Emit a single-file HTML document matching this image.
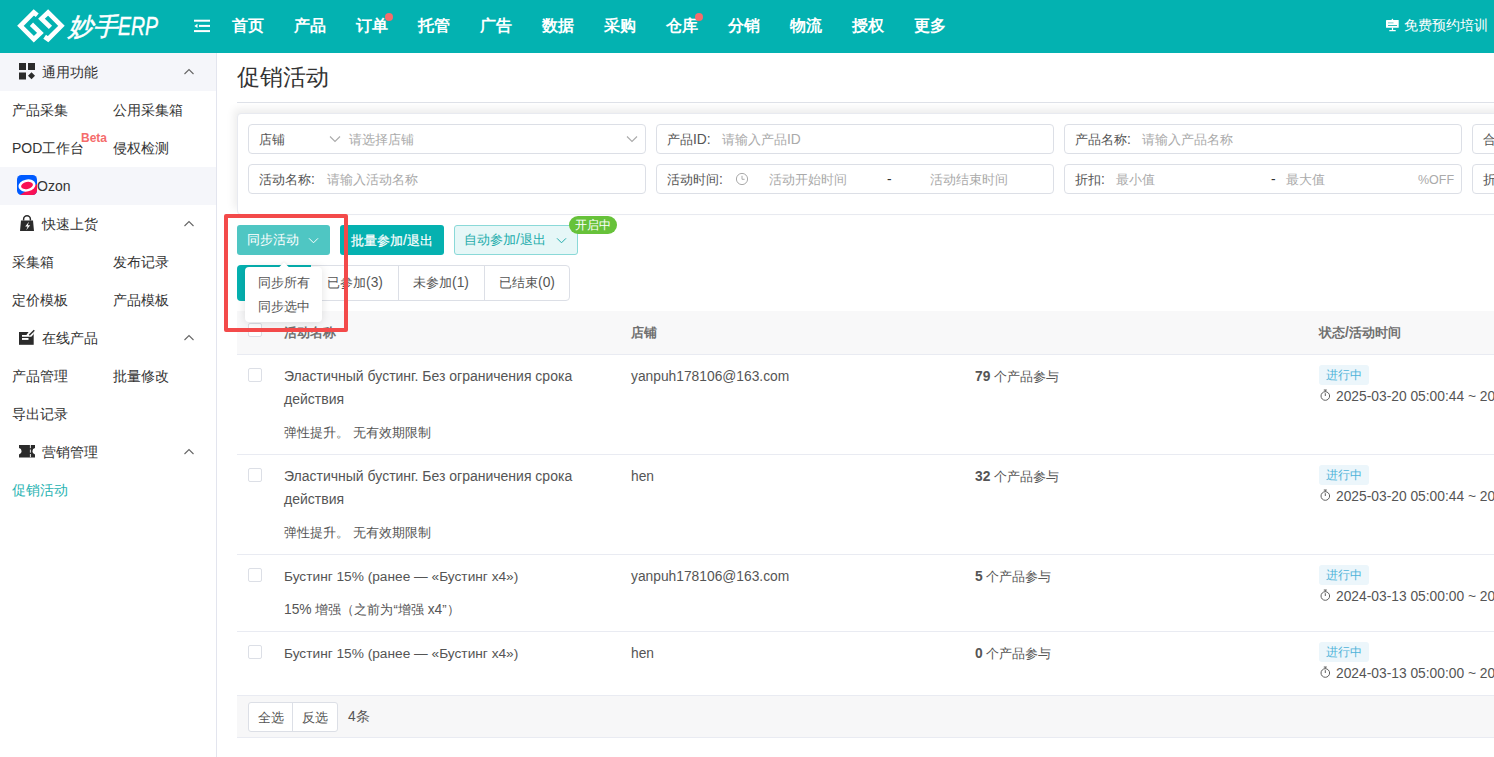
<!DOCTYPE html>
<html><head><meta charset="utf-8">
<style>
.L{font-size:13.8px}.C{font-size:14px}
*{box-sizing:border-box;margin:0;padding:0}
html,body{width:1494px;height:757px;overflow:hidden;background:#fff;font-family:"Liberation Sans",sans-serif;color:#333}
.a{position:absolute;white-space:nowrap}
#hdr{position:absolute;left:0;top:0;width:1494px;height:53px;background:#03b2b1}
.nav{position:absolute;top:15px;font-size:16px;font-weight:bold;color:#fff;line-height:22px}
.dot{position:absolute;width:8px;height:8px;border-radius:50%;background:#f56c6c}
#side{position:absolute;left:0;top:53px;width:217px;height:704px;background:#fff;border-right:1px solid #e3e5ee}
.srow{position:absolute;left:0;width:216px;height:38px}
.stxt{position:absolute;white-space:nowrap;font-size:14px;line-height:20px;color:#333}
.chev{position:absolute;left:184px;width:10px;height:10px}
#main{position:absolute;left:217px;top:53px;width:1277px;height:704px}
.inp{position:absolute;height:30px;border:1px solid #dcdfe6;border-radius:4px;background:#fff}
.lbl{position:absolute;top:6px;font-size:13px;line-height:17px;color:#555}
.ph{position:absolute;top:6px;font-size:13px;line-height:17px;color:#aaa}
.cb{position:absolute;left:248px;width:14px;height:14px;border:1px solid #dcdfe6;border-radius:2px;background:#fff}
.rtxt{position:absolute;white-space:nowrap;font-size:13px;line-height:17px;color:#555}
.tag{position:absolute;left:1319px;width:50px;height:20px;border-radius:3px;background:#ecf6fb;color:#4fb3d9;font-size:12px;line-height:20px;text-align:center}
.hline{position:absolute;left:237px;width:1257px;height:1px;background:#e9ebf2}
</style></head><body>

<div id="hdr">
  <!-- logo -->
  <svg class="a" style="left:14px;top:6px" width="56" height="40" viewBox="0 0 1060 757">
    <g fill="none" stroke="#fff" stroke-width="88" stroke-linecap="butt" stroke-linejoin="miter">
      <path d="M440 175 L375 122 L122 375 L375 628 L500 510 L330 345"/>
      <path d="M580 582 L645 628 L898 375 L645 122 L520 240 L690 405"/>
    </g>
  </svg>
  <div class="a" style="left:68px;top:11px;font-size:25px;line-height:30px;color:#fff;font-style:italic;-webkit-text-stroke:0.5px #fff">妙手</div>
  <div class="a" style="left:118px;top:11px;font-size:25px;line-height:30px;color:#fff;font-style:italic;transform:scaleX(0.78);transform-origin:0 0;font-family:'Liberation Sans';-webkit-text-stroke:0.4px #fff">ERP</div>
  <!-- hamburger -->
  <svg class="a" style="left:194px;top:19px" width="16" height="14" viewBox="0 0 16 14">
    <rect x="0" y="0.7" width="16" height="2" fill="#fff"/>
    <rect x="5" y="5.9" width="11" height="2" fill="#fff"/>
    <path d="M0.3 6.9 L3.5 4.8 L3.5 9Z" fill="#fff"/>
    <rect x="0" y="11.1" width="16" height="2" fill="#fff"/>
  </svg>
  <div class="nav" style="left:232px">首页</div>
  <div class="nav" style="left:294px">产品</div>
  <div class="nav" style="left:356px">订单</div>
  <div class="dot" style="left:385px;top:13px"></div>
  <div class="nav" style="left:418px">托管</div>
  <div class="nav" style="left:480px">广告</div>
  <div class="nav" style="left:542px">数据</div>
  <div class="nav" style="left:604px">采购</div>
  <div class="nav" style="left:666px">仓库</div>
  <div class="dot" style="left:695px;top:13px"></div>
  <div class="nav" style="left:728px">分销</div>
  <div class="nav" style="left:790px">物流</div>
  <div class="nav" style="left:852px">授权</div>
  <div class="nav" style="left:914px">更多</div>
  <svg class="a" style="left:1386px;top:18px" width="14" height="14" viewBox="0 0 14 14">
    <rect x="0" y="2" width="12.7" height="7.8" rx="0.6" fill="#fff"/>
    <path d="M5.4 2.1 L6.4 0.5 L7.4 2.1Z" fill="#fff"/>
    <rect x="2" y="4.3" width="5.5" height="1.1" fill="#7fd3d2"/>
    <rect x="2" y="7" width="9" height="1" fill="#2fbcbb"/>
    <rect x="5.9" y="9.5" width="1.2" height="3" fill="#fff"/>
    <rect x="3.2" y="12" width="6.6" height="1.2" rx="0.5" fill="#fff"/>
  </svg>
  <div class="a" style="left:1404px;top:17px;font-size:14px;line-height:16px;color:#fff">免费预约培训</div>
</div>

<div id="side">
  <div class="srow" style="top:0;background:#f5f6fa"></div>
  <svg class="a" style="left:19px;top:10px" width="17" height="17" viewBox="0 0 17 17">
    <rect x="0" y="0" width="7" height="7" fill="#2b2b2b"/>
    <rect x="9" y="0" width="7" height="7" fill="#2b2b2b"/>
    <rect x="0" y="9.5" width="7" height="7" fill="#2b2b2b"/>
    <path d="M12.5 9.2 L16 12.7 L12.5 16.2 L9 12.7Z" fill="#2b2b2b"/>
  </svg>
  <div class="stxt" style="left:42px;top:9px">通用功能</div>
  <svg class="chev" style="top:14px" viewBox="0 0 10 10"><path d="M0.5 7 L5 2.5 L9.5 7" fill="none" stroke="#666" stroke-width="1.1"/></svg>

  <div class="stxt" style="left:12px;top:47px">产品采集</div>
  <div class="stxt" style="left:113px;top:47px">公用采集箱</div>
  <div class="stxt" style="left:12px;top:85px"><span style="font-family:'Liberation Sans'">POD</span>工作台</div>
  <div class="a" style="left:81px;top:79px;font-size:12px;line-height:12px;font-weight:bold;color:#f56c6c">Beta</div>
  <div class="stxt" style="left:113px;top:85px">侵权检测</div>

  <div class="srow" style="top:114px;background:#f5f6fa"></div>
  <svg class="a" style="left:17px;top:122px" width="20" height="20" viewBox="0 0 20 20">
    <defs><clipPath id="oc"><rect x="0" y="0" width="20" height="20" rx="4.5"/></clipPath></defs>
    <g clip-path="url(#oc)">
      <rect x="0" y="0" width="20" height="20" fill="#005bff"/>
      <path d="M3 20 L20 9 L20 20Z" fill="#f91155"/>
      <ellipse cx="10" cy="10.5" rx="8.6" ry="6" transform="rotate(-12 10 10.5)" fill="#fff"/>
      <ellipse cx="10" cy="10.5" rx="6" ry="3.5" transform="rotate(-12 10 10.5)" fill="#f91155"/>
    </g>
  </svg>
  <div class="stxt" style="left:37px;top:123px;font-family:'Liberation Sans'">Ozon</div>

  <svg class="a" style="left:20px;top:162px" width="14" height="16" viewBox="0 0 14 16">
    <path d="M3.6 5.5 L3.6 4.2 A3.4 3.4 0 0 1 10.4 4.2 L10.4 5.5" fill="none" stroke="#2b2b2b" stroke-width="1.5"/>
    <path d="M1 5.5 L13 5.5 L14 16 L0 16Z" fill="#2b2b2b"/>
    <path d="M9 6.8 L5.2 11.6 L7.6 11.6 L6.2 15.2 L10.2 10.2 L7.8 10.2Z" fill="#fff"/>
  </svg>
  <div class="stxt" style="left:42px;top:161px">快速上货</div>
  <svg class="chev" style="top:166px" viewBox="0 0 10 10"><path d="M0.5 7 L5 2.5 L9.5 7" fill="none" stroke="#666" stroke-width="1.1"/></svg>

  <div class="stxt" style="left:12px;top:199px">采集箱</div>
  <div class="stxt" style="left:113px;top:199px">发布记录</div>
  <div class="stxt" style="left:12px;top:237px">定价模板</div>
  <div class="stxt" style="left:113px;top:237px">产品模板</div>

  <svg class="a" style="left:19px;top:276px" width="17" height="17" viewBox="0 0 17 17">
    <rect x="0" y="3" width="14.7" height="12.8" fill="#2b2b2b"/>
    <path d="M9.6 2.9 L14.8 2.9 L14.8 5 L12.3 7.8 L3 7.8 L3 6 L7.4 6 Z" fill="#fff"/>
    <rect x="3" y="9" width="6.5" height="1.9" fill="#fff"/>
    <path d="M10.3 6.3 L15.3 1.2" stroke="#2b2b2b" stroke-width="1.5"/>
  </svg>
  <div class="stxt" style="left:42px;top:275px">在线产品</div>
  <svg class="chev" style="top:280px" viewBox="0 0 10 10"><path d="M0.5 7 L5 2.5 L9.5 7" fill="none" stroke="#666" stroke-width="1.1"/></svg>

  <div class="stxt" style="left:12px;top:313px">产品管理</div>
  <div class="stxt" style="left:113px;top:313px">批量修改</div>
  <div class="stxt" style="left:12px;top:351px">导出记录</div>

  <svg class="a" style="left:19px;top:392px" width="17" height="13" viewBox="0 0 17 13">
    <path d="M0 0 H16 V3 A3.27 3.27 0 0 0 16 9.4 V12.5 H0 V9.4 A3.27 3.27 0 0 0 0 3 Z" fill="#2b2b2b"/>
    <path d="M11.4 0 V12.5" stroke="#fff" stroke-width="0.9" stroke-dasharray="3.2 1.3"/>
  </svg>
  <div class="stxt" style="left:42px;top:389px">营销管理</div>
  <svg class="chev" style="top:394px" viewBox="0 0 10 10"><path d="M0.5 7 L5 2.5 L9.5 7" fill="none" stroke="#666" stroke-width="1.1"/></svg>

  <div class="stxt" style="left:12px;top:427px;color:#29b3b2">促销活动</div>
</div>

<!-- main -->
<div class="a" style="left:237px;top:64px;font-size:23px;line-height:27px;color:#333">促销活动</div>
<div class="hline" style="top:102px;height:1px;background:#dfe2e9"></div>

<!-- filter card -->
<div class="a" style="left:237px;top:113px;width:1270px;height:102px;border:1px solid #e8eaf0;border-radius:4px;box-shadow:-4px -5px 9px -1px rgba(0,0,0,.075);background:#fff"></div>

<div class="inp" style="left:248px;top:124px;width:398px">
  <div class="lbl" style="left:10px">店铺</div>
  <svg class="a" style="left:80px;top:10px" width="12" height="8" viewBox="0 0 12 8"><path d="M1 1.5 L6 6.5 L11 1.5" fill="none" stroke="#aaa" stroke-width="1.1"/></svg>
  <div class="ph" style="left:100px">请选择店铺</div>
  <svg class="a" style="left:377px;top:10px" width="12" height="8" viewBox="0 0 12 8"><path d="M1 1.5 L6 6.5 L11 1.5" fill="none" stroke="#aaa" stroke-width="1.1"/></svg>
</div>
<div class="inp" style="left:656px;top:124px;width:398px">
  <div class="lbl" style="left:10px">产品<span class="L">ID:</span></div>
  <div class="ph" style="left:65px">请输入产品<span class="L">ID</span></div>
</div>
<div class="inp" style="left:1064px;top:124px;width:398px">
  <div class="lbl" style="left:10px">产品名称<span class="L">:</span></div>
  <div class="ph" style="left:77px">请输入产品名称</div>
</div>
<div class="inp" style="left:1472px;top:124px;width:100px">
  <div class="lbl" style="left:10px">合</div>
</div>

<div class="inp" style="left:248px;top:164px;width:398px">
  <div class="lbl" style="left:10px">活动名称<span class="L">:</span></div>
  <div class="ph" style="left:78px">请输入活动名称</div>
</div>
<div class="inp" style="left:656px;top:164px;width:398px">
  <div class="lbl" style="left:10px">活动时间<span class="L">:</span></div>
  <svg class="a" style="left:78px;top:7px" width="14" height="14" viewBox="0 0 14 14"><circle cx="7" cy="7" r="5.6" fill="none" stroke="#aaa" stroke-width="1"/><path d="M7 3.8 L7 7.3 L9.6 7.3" fill="none" stroke="#aaa" stroke-width="1"/></svg>
  <div class="ph" style="left:112px">活动开始时间</div>
  <div class="lbl" style="left:230px;color:#333"><span class="L">-</span></div>
  <div class="ph" style="left:273px">活动结束时间</div>
</div>
<div class="inp" style="left:1064px;top:164px;width:398px">
  <div class="lbl" style="left:10px">折扣<span class="L">:</span></div>
  <div class="ph" style="left:51px">最小值</div>
  <div class="lbl" style="left:206px;color:#333"><span class="L">-</span></div>
  <div class="ph" style="left:221px">最大值</div>
  <div class="ph" style="left:353px"><span class="L" style="font-size:12.5px">%OFF</span></div>
</div>
<div class="inp" style="left:1472px;top:164px;width:100px">
  <div class="lbl" style="left:10px">折</div>
</div>

<!-- buttons -->
<div class="a" style="left:237px;top:225px;width:93px;height:30px;border-radius:3px;background:#4fc6c3;color:#fff;font-size:13px;line-height:30px;padding-left:10px">同步活动</div>
<svg class="a" style="left:308px;top:237px" width="11" height="7" viewBox="0 0 11 7"><path d="M1 1.3 L5.5 5.8 L10 1.3" fill="none" stroke="#fff" stroke-width="1"/></svg>
<div class="a" style="left:340px;top:225px;width:104px;height:30px;border-radius:3px;background:#05b1b0;color:#fff;font-size:13px;-webkit-text-stroke:0.2px #fff;line-height:31px;text-align:center">批量参加<span class="L">/</span>退出</div>
<div class="a" style="left:454px;top:225px;width:124px;height:30px;border-radius:3px;background:#e6f7f7;border:1px solid #8ad9d8;color:#22acab;font-size:13px;line-height:28px;padding-left:9px">自动参加<span class="L">/</span>退出</div>
<svg class="a" style="left:556px;top:237px" width="11" height="7" viewBox="0 0 11 7"><path d="M1 1.3 L5.5 5.8 L10 1.3" fill="none" stroke="#22acab" stroke-width="1"/></svg>
<div class="a" style="left:569px;top:216px;width:48px;height:18px;border-radius:9px;background:#67c23a;color:#fff;font-size:12px;line-height:18px;text-align:center">开启中</div>

<!-- tabs -->
<div class="a" style="left:237px;top:265px;width:333px;height:36px;border:1px solid #dcdfe6;border-radius:4px;background:#fff"></div>
<div class="a" style="left:237px;top:265px;width:74px;height:36px;border-radius:4px 0 0 4px;background:#05b1b0;color:#fff;font-size:13px;line-height:36px;text-align:center">全部<span class="L">(4)</span></div>
<div class="a" style="left:312px;top:265px;width:86px;height:36px;font-size:13px;line-height:36px;text-align:center;color:#555">已参加<span class="L">(3)</span></div>
<div class="a" style="left:398px;top:265px;width:1px;height:36px;background:#dcdfe6"></div>
<div class="a" style="left:398px;top:265px;width:86px;height:36px;font-size:13px;line-height:36px;text-align:center;color:#555">未参加<span class="L">(1)</span></div>
<div class="a" style="left:484px;top:265px;width:1px;height:36px;background:#dcdfe6"></div>
<div class="a" style="left:484px;top:265px;width:86px;height:36px;font-size:13px;line-height:36px;text-align:center;color:#555">已结束<span class="L">(0)</span></div>

<!-- table header -->
<div class="a" style="left:237px;top:311px;width:1257px;height:44px;background:#f8f8f9;border-bottom:1px solid #e9ebf2"></div>
<div class="cb" style="top:323px"></div>
<div class="a" style="left:284px;top:324px;font-size:13px;line-height:17px;font-weight:bold;color:#707070">活动名称</div>
<div class="a" style="left:631px;top:324px;font-size:13px;line-height:17px;font-weight:bold;color:#707070">店铺</div>
<div class="a" style="left:1319px;top:324px;font-size:13px;line-height:17px;font-weight:bold;color:#707070">状态<span class="L">/</span>活动时间</div>

<!-- rows -->
<div class="cb" style="top:368px"></div>
<div class="rtxt" style="left:284px;top:368px"><span class="C">Эластичный бустинг. Без ограничения срока</span></div>
<div class="rtxt" style="left:284px;top:391px"><span class="C">действия</span></div>
<div class="rtxt" style="left:284px;top:424px">弹性提升。 无有效期限制</div>
<div class="rtxt" style="left:631px;top:368px"><span class="L">yanpuh178106@163.com</span></div>
<div class="rtxt" style="left:975px;top:368px"><b><span class="L">79</span></b> 个产品参与</div>
<div class="tag" style="top:365px">进行中</div>
<div class="rtxt" style="left:1320px;top:388px;padding-left:16px"><svg style="position:absolute;left:0;top:1px" width="11" height="12" viewBox="0 0 11 12"><circle cx="5.3" cy="7" r="4.3" fill="none" stroke="#606060" stroke-width="1"/><path d="M3.8 1 L6.8 1 M5.3 1 L5.3 2.7 M5.3 7 L5.3 4.2" fill="none" stroke="#606060" stroke-width="1"/></svg><span class="L">2025-03-20 05:00:44 ~ 2025-04-20</span></div>
<div class="hline" style="top:454px"></div>

<div class="cb" style="top:468px"></div>
<div class="rtxt" style="left:284px;top:468px"><span class="C">Эластичный бустинг. Без ограничения срока</span></div>
<div class="rtxt" style="left:284px;top:491px"><span class="C">действия</span></div>
<div class="rtxt" style="left:284px;top:524px">弹性提升。 无有效期限制</div>
<div class="rtxt" style="left:631px;top:468px"><span class="L">hen</span></div>
<div class="rtxt" style="left:975px;top:468px"><b><span class="L">32</span></b> 个产品参与</div>
<div class="tag" style="top:465px">进行中</div>
<div class="rtxt" style="left:1320px;top:488px;padding-left:16px"><svg style="position:absolute;left:0;top:1px" width="11" height="12" viewBox="0 0 11 12"><circle cx="5.3" cy="7" r="4.3" fill="none" stroke="#606060" stroke-width="1"/><path d="M3.8 1 L6.8 1 M5.3 1 L5.3 2.7 M5.3 7 L5.3 4.2" fill="none" stroke="#606060" stroke-width="1"/></svg><span class="L">2025-03-20 05:00:44 ~ 2025-04-20</span></div>
<div class="hline" style="top:554px"></div>

<div class="cb" style="top:568px"></div>
<div class="rtxt" style="left:284px;top:568px"><span class="C" style="font-size:13.7px">Бустинг 15% (ранее — «Бустинг x4»)</span></div>
<div class="rtxt" style="left:284px;top:601px"><span class="L">15% </span>增强（之前为“增强<span class="L"> x4</span>”）</div>
<div class="rtxt" style="left:631px;top:568px"><span class="L">yanpuh178106@163.com</span></div>
<div class="rtxt" style="left:975px;top:568px"><b><span class="L">5</span></b> 个产品参与</div>
<div class="tag" style="top:565px">进行中</div>
<div class="rtxt" style="left:1320px;top:588px;padding-left:16px"><svg style="position:absolute;left:0;top:1px" width="11" height="12" viewBox="0 0 11 12"><circle cx="5.3" cy="7" r="4.3" fill="none" stroke="#606060" stroke-width="1"/><path d="M3.8 1 L6.8 1 M5.3 1 L5.3 2.7 M5.3 7 L5.3 4.2" fill="none" stroke="#606060" stroke-width="1"/></svg><span class="L">2024-03-13 05:00:00 ~ 2024-04-13</span></div>
<div class="hline" style="top:631px"></div>

<div class="cb" style="top:645px"></div>
<div class="rtxt" style="left:284px;top:645px"><span class="C" style="font-size:13.7px">Бустинг 15% (ранее — «Бустинг x4»)</span></div>
<div class="rtxt" style="left:631px;top:645px"><span class="L">hen</span></div>
<div class="rtxt" style="left:975px;top:645px"><b><span class="L">0</span></b> 个产品参与</div>
<div class="tag" style="top:642px">进行中</div>
<div class="rtxt" style="left:1320px;top:665px;padding-left:16px"><svg style="position:absolute;left:0;top:1px" width="11" height="12" viewBox="0 0 11 12"><circle cx="5.3" cy="7" r="4.3" fill="none" stroke="#606060" stroke-width="1"/><path d="M3.8 1 L6.8 1 M5.3 1 L5.3 2.7 M5.3 7 L5.3 4.2" fill="none" stroke="#606060" stroke-width="1"/></svg><span class="L">2024-03-13 05:00:00 ~ 2024-04-13</span></div>

<!-- footer -->
<div class="a" style="left:237px;top:695px;width:1257px;height:43px;background:#f7f7f8;border-top:1px solid #e9ebf2;border-bottom:1px solid #e9ebf2"></div>
<div class="a" style="left:248px;top:702px;width:90px;height:30px;border:1px solid #dcdfe6;border-radius:3px;background:#fff"></div>
<div class="a" style="left:292px;top:702px;width:1px;height:30px;background:#dcdfe6"></div>
<div class="a" style="left:258px;top:709px;font-size:13px;line-height:17px;color:#555">全选</div>
<div class="a" style="left:302px;top:709px;font-size:13px;line-height:17px;color:#555">反选</div>
<div class="a" style="left:348px;top:708px;font-size:14px;line-height:17px;color:#555"><span class="L">4</span>条</div>

<!-- dropdown popup -->
<div class="a" style="left:245px;top:267px;width:77px;height:55px;background:#fff;border-radius:4px;box-shadow:0 1px 10px rgba(0,0,0,.12)"></div>
<div class="a" style="left:280px;top:264px;width:8px;height:8px;background:#fff;transform:rotate(45deg);box-shadow:-1px -1px 2px rgba(0,0,0,.05)"></div>
<div class="a" style="left:258px;top:274px;font-size:13px;line-height:17px;color:#555">同步所有</div>
<div class="a" style="left:258px;top:298px;font-size:13px;line-height:17px;color:#555">同步选中</div>

<!-- red highlight -->
<div class="a" style="left:224px;top:214px;width:124px;height:118px;border:4px solid #f34a4a;border-radius:2px"></div>
</body></html>
